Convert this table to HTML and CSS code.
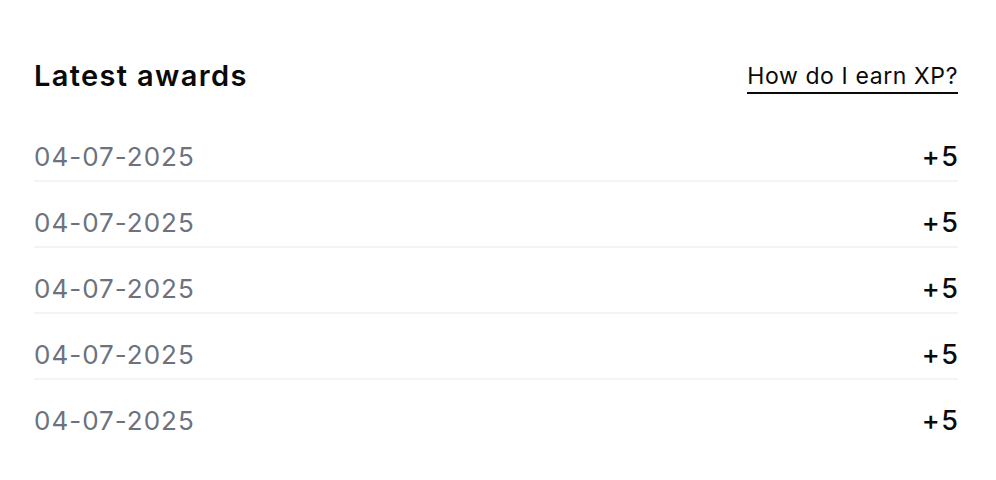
FILE: index.html
```html
<!DOCTYPE html>
<html>
<head>
<meta charset="utf-8">
<link rel="stylesheet" href="styles.css">
</head>
<body>
<section class="awards">
  <header class="head">
    <h2 class="title">Latest awards</h2>
    <a class="link" href="#">How do I earn XP?</a>
  </header>
  <ul class="list">
    <li class="row"><span class="date">04-07-2025</span><span class="xp">+5</span></li>
    <li class="row"><span class="date">04-07-2025</span><span class="xp">+5</span></li>
    <li class="row"><span class="date">04-07-2025</span><span class="xp">+5</span></li>
    <li class="row"><span class="date">04-07-2025</span><span class="xp">+5</span></li>
    <li class="row"><span class="date">04-07-2025</span><span class="xp">+5</span></li>
  </ul>
</section>
</body>
</html>
```
FILE: styles.css
```css
html, body {
  margin: 0;
  padding: 0;
  background: #fff;
}
body {
  font-family: Inter, "Noto Sans", sans-serif;
  color: #0a0a0a;
}
.awards {
  padding: 58px 38px 0 34px;
}
.head {
  display: flex;
  justify-content: space-between;
  align-items: flex-start;
  margin-bottom: 22px;
}
.title {
  margin: 0;
  font-size: 29px;
  font-weight: 600;
  line-height: 36px;
  letter-spacing: 1.35px;
}
.link {
  display: inline-block;
  margin-top: 5px;
  color: #0a0a0a;
  text-decoration: none;
  font-size: 23px;
  line-height: 26px;
  letter-spacing: 0.6px;
  padding-bottom: 3px;
  border-bottom: 2px solid #0a0a0a;
}
.list {
  list-style: none;
  margin: 0;
  padding: 0;
}
.row {
  display: flex;
  justify-content: space-between;
  align-items: center;
  padding: 29px 0 11px;
  line-height: 24px;
  border-bottom: 2px solid #f3f4f6;
}
.row:last-child {
  border-bottom: none;
}
.date {
  font-size: 26px;
  letter-spacing: 1px;
  color: #6b7280;
}
.xp {
  font-size: 27px;
  font-weight: 500;
  letter-spacing: 1.5px;
  margin-right: -1.5px;
  color: #0a0a0a;
}
```
